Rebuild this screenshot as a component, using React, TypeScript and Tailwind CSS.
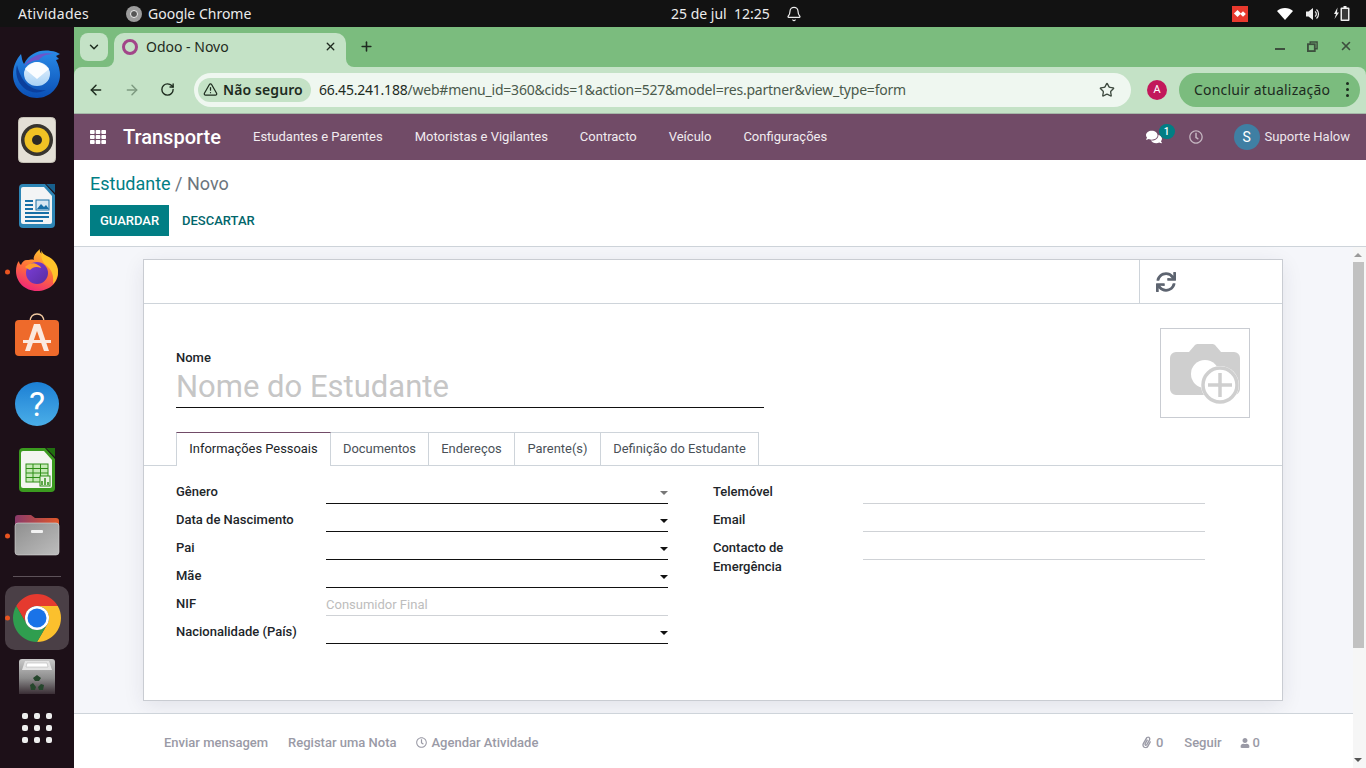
import React from "react";
import { ArrowLeft, ArrowRight, RotateCw, X, Plus, ChevronDown, Star, TriangleAlert, Bell } from "lucide-react";
import { FaSync, FaComments, FaRegClock, FaPaperclip, FaUser, FaTh } from "react-icons/fa";

function Slot({ children, dot, h = 66 }: { children: React.ReactNode; dot?: boolean; h?: number }) {
  return (
    <div className="relative flex items-center justify-center w-[74px] shrink-0" style={{ height: h }}>
      {dot && <span className="absolute left-[5px] top-1/2 -translate-y-1/2 w-[5px] h-[5px] rounded-full bg-[#e95420]" />}
      {children}
    </div>
  );
}

function Thunderbird() {
  return (
    <svg width="50" height="50" viewBox="0 0 50 50">
      <defs>
        <linearGradient id="tb" x1="0" y1="0" x2="0" y2="1"><stop offset="0" stopColor="#2a8be8" /><stop offset="1" stopColor="#0a4fb5" /></linearGradient>
        <linearGradient id="tbe" x1="0" y1="0" x2="0" y2="1"><stop offset="0" stopColor="#e8f3fd" /><stop offset="1" stopColor="#a9d2f5" /></linearGradient>
      </defs>
      <path d="M9 5c1 4 1 7 3 10C18 3 30-1 44 3l4 2-4 2 3 3-3 1c3 5 4 11 4 15 0 12-10 23-23 23C11 49 1 38 1 26 1 17 4 11 9 5z" fill="url(#tb)" />
      <path d="M12 17C18 7 30 2 42 5c-8 0-12 2-15 6-6 0-11 3-15 6z" fill="#6e55c9" />
      <path d="M5 16c-2 8 0 17 7 23 6 5 15 6 22 2-10 1-19-3-24-12-2-4-4-8-5-13z" fill="#0b3f9c" />
      <ellipse cx="25" cy="25" rx="13" ry="12" fill="url(#tbe)" />
      <path d="M13 20c3-3 8-7 12-7s9 4 12 7l-12 10z" fill="#fbfdff" />
    </svg>
  );
}

function Rhythmbox() {
  return (
    <svg width="38" height="46" viewBox="0 0 38 46">
      <rect x="0.5" y="0.5" width="37" height="45" rx="4" fill="#e4e0d6" stroke="#c6c2b7" />
      <circle cx="19" cy="23" r="16" fill="#37342f" />
      <circle cx="19" cy="23" r="12.5" fill="#f0c224" />
      <circle cx="19" cy="23" r="5" fill="#2c2a26" />
    </svg>
  );
}

function Writer() {
  return (
    <svg width="38" height="46" viewBox="0 0 38 46">
      <path d="M5 1h22l10 11v29a4 4 0 0 1-4 4H5a4 4 0 0 1-4-4V5a4 4 0 0 1 4-4z" fill="#2d85b5" />
      <path d="M5 4h21l8 9v26a2 2 0 0 1-2 2H5a2 2 0 0 1-2-2V6a2 2 0 0 1 2-2z" fill="#f3f4f5" />
      <path d="M28 1h9v9z" fill="#175f8c" />
      <rect x="7" y="17" width="8" height="2" fill="#176fa6" />
      <rect x="7" y="21" width="8" height="2" fill="#176fa6" />
      <rect x="7" y="25" width="8" height="2" fill="#176fa6" />
      <rect x="7" y="29" width="24" height="2" fill="#176fa6" />
      <rect x="7" y="33" width="24" height="2" fill="#176fa6" />
      <rect x="7" y="37" width="18" height="2" fill="#176fa6" />
      <rect x="18" y="17" width="13" height="10" fill="#d7e7f2" stroke="#176fa6" />
      <path d="M19 26l4-5 3 3 2-2 3 4z" fill="#176fa6" />
    </svg>
  );
}

function Firefox() {
  return (
    <svg width="44" height="44" viewBox="0 0 44 44" className="-mt-[4px]">
      <defs>
        <linearGradient id="ff" x1="0.7" y1="0" x2="0.3" y2="1"><stop offset="0" stopColor="#ffcb2e" /><stop offset="0.5" stopColor="#ff7139" /><stop offset="1" stopColor="#f0247a" /></linearGradient>
        <linearGradient id="ffp" x1="0" y1="0" x2="1" y2="1"><stop offset="0" stopColor="#7c3fdb" /><stop offset="1" stopColor="#5a2ca0" /></linearGradient>
      </defs>
      <path d="M22 43C10 43 1 34 1 23c0-4 1-8 3-10 0 2 1 3 2 4 1-3 3-5 6-5 3 0 5-1 7 0-1-2 0-6 6-11-1 3 1 5 5 7 7 3 13 9 13 17 0 10-9 18-21 18z" fill="url(#ff)" />
      <path d="M27 1c-1 3 1 5 5 7 7 3 11 9 11 15 0 5-2 10-5 13 1-8-1-14-6-18-5-3-7-10-5-17z" fill="#ffc42a" />
      <circle cx="22" cy="25" r="11" fill="url(#ffp)" />
      <path d="M10 19c4-4 9-5 13-2 2 1 3 2 3 3-5-2-8-1-11 2-2-1-4-2-5-3z" fill="#ff9c2e" />
    </svg>
  );
}

function Software() {
  return (
    <svg width="46" height="44" viewBox="0 0 46 44" className="-mt-[6px]">
      <path d="M16 9c0-5 3-8 7-8s7 3 7 8" fill="none" stroke="#f0c9a0" strokeWidth="1.6" />
      <rect x="1" y="7" width="44" height="36" rx="4" fill="#ee6a2b" />
      <path d="M20 11h6l9 27h-5l-7-20-7 20h-5z" fill="#fbe9df" />
      <rect x="9" y="27" width="28" height="3" fill="#fbe9df" />
    </svg>
  );
}

function Help() {
  return (
    <div className="w-[44px] h-[44px] rounded-full bg-gradient-to-b from-[#1b7fd4] to-[#4aaee8] flex items-center justify-center text-white text-[34px] font-[Roboto] leading-none">?</div>
  );
}

function Calc() {
  return (
    <svg width="38" height="46" viewBox="0 0 38 46">
      <path d="M5 1h22l10 11v29a4 4 0 0 1-4 4H5a4 4 0 0 1-4-4V5a4 4 0 0 1 4-4z" fill="#3b9a1f" />
      <path d="M5 4h21l8 9v26a2 2 0 0 1-2 2H5a2 2 0 0 1-2-2V6a2 2 0 0 1 2-2z" fill="#f3f5f0" />
      <path d="M28 1h9v9z" fill="#216f10" />
      <rect x="8" y="17" width="22" height="18" fill="#c5eab5" stroke="#2f8f17" />
      <path d="M8 21.500h22M8 26h22M8 30.500h22M15 17v18M22.500 17v18" stroke="#2f8f17" />
      <rect x="22" y="29" width="10" height="10" fill="#e8f3e0" stroke="#2f8f17" />
      <path d="M24 38v-4M27 38v-7M30 38v-3" stroke="#2f8f17" strokeWidth="1.500" />
    </svg>
  );
}

function Files() {
  return (
    <svg width="46" height="42" viewBox="0 0 46 42" className="-mt-[2px]">
      <defs>
        <linearGradient id="fo" x1="0" y1="0" x2="1" y2="0"><stop offset="0" stopColor="#8a3a6a" /><stop offset="1" stopColor="#e0582a" /></linearGradient>
        <linearGradient id="fg" x1="0" y1="0" x2="1" y2="1"><stop offset="0" stopColor="#8f8f8f" /><stop offset="1" stopColor="#bdbdbd" /></linearGradient>
      </defs>
      <path d="M1 16V4a3 3 0 0 1 3-3h13l4 3h21a3 3 0 0 1 3 3v9z" fill="url(#fo)" />
      <rect x="1" y="9" width="44" height="32" rx="3" fill="url(#fg)" stroke="#d8d8d8" strokeWidth="0.6" />
      <rect x="17" y="16" width="12" height="3" rx="1" fill="#f2f2f2" />
    </svg>
  );
}

function Chrome({ size }: { size: number }) {
  return (
    <svg width={size} height={size} viewBox="0 0 48 48">
      <path d="M3.220 12A24 24 0 0 1 44.780 12H24A12 12 0 0 0 13.600 30Z" fill="#e53a2f" />
      <path d="M44.780 12H24A12 12 0 0 1 34.390 30L24 48A24 24 0 0 0 44.780 12Z" fill="#fbc02d" />
      <path d="M3.220 12L13.600 30A12 12 0 0 0 34.390 30L24 48A24 24 0 0 1 3.220 12Z" fill="#2f9e4f" />
      <circle cx="24" cy="24" r="12" fill="#fff" />
      <circle cx="24" cy="24" r="9.500" fill="#1a73e8" />
    </svg>
  );
}

function Trash() {
  return (
    <svg width="38" height="36" viewBox="0 0 38 36">
      <defs>
        <linearGradient id="tr" x1="0" y1="0" x2="0" y2="1"><stop offset="0" stopColor="#c9c9c9" /><stop offset="0.55" stopColor="#8d8d8d" /><stop offset="1" stopColor="#3a2e35" /></linearGradient>
      </defs>
      <path d="M4 1h30a3 3 0 0 1 3 3v32H1V4a3 3 0 0 1 3-3z" fill="url(#tr)" />
      <path d="M7 3h24l3 9H4z" fill="#e4e4e4" />
      <path d="M9 5h20l1 4H8z" fill="#fff" stroke="#aaa" strokeWidth="0.5" />
      <path d="M15 20l4-3 4 3-2 3h-4zM12 27l3-2 3 4-1 3h-4zM26 27l-3-1-3 3 1 3h4z" fill="#25462c" />
    </svg>
  );
}

function Dock() {
  return (
    <aside className="w-[74px] shrink-0 bg-[#1d1018] flex flex-col items-center pt-[14px]">
      <Slot><Thunderbird /></Slot>
      <Slot><Rhythmbox /></Slot>
      <Slot><Writer /></Slot>
      <Slot dot><Firefox /></Slot>
      <Slot><Software /></Slot>
      <Slot><Help /></Slot>
      <Slot><Calc /></Slot>
      <Slot dot><Files /></Slot>
      <div className="w-[48px] h-px bg-[#5d5259] mt-[7px] mb-[9px] shrink-0" />
      <Slot dot h={64}>
        <div className="w-[64px] h-[64px] rounded-[10px] bg-[#4a3f46] flex items-center justify-center"><Chrome size={48} /></div>
      </Slot>
      <Slot h={44}><div className="h-[36px] -mb-[8px]"><Trash /></div></Slot>
      <div className="grid grid-cols-3 gap-[6px] mt-[19px]">
        {[0, 1, 2, 3, 4, 5, 6, 7, 8].map((i) => (
          <span key={i} className="w-[6px] h-[6px] rounded-[2px] bg-[#eeeeee]" />
        ))}
      </div>
    </aside>
  );
}

function TopBar() {
  return (
    <header className="h-[27px] shrink-0 bg-[#121212] text-[#ececec] text-[14px] font-['Noto_Sans'] flex items-center">
      <span className="ml-[18px] w-[71px] tracking-[0.3px] whitespace-nowrap">Atividades</span>
      <span className="ml-[37px] w-[16px] h-[16px] rounded-full bg-[#9c9c9c] flex items-center justify-center">
        <span className="w-[8px] h-[8px] rounded-full bg-[#555] border border-[#eee]" />
      </span>
      <span className="ml-[6px] w-[104px] whitespace-nowrap">Google Chrome</span>
      <span className="ml-[419px] w-[98px] whitespace-pre">25 de jul  12:25</span>
      <Bell size={16} strokeWidth={1.800} className="ml-[17px]" />
      <span className="ml-[430px] w-[16px] h-[16px] bg-[#e8392d] flex items-center justify-center gap-[1px]">
        <span className="w-[5px] h-[5px] bg-white rotate-45" />
        <span className="w-[4px] h-[4px] bg-white rotate-45" />
      </span>
      <svg width="16" height="12" viewBox="0 0 16 12" className="ml-[29px]">
        <path d="M8 12L0 3C4-1 12-1 16 3Z" fill="#fff" />
      </svg>
      <svg width="14" height="14" viewBox="0 0 14 14" className="ml-[13px]">
        <path d="M0 4.500h2.500L7 1v12L2.500 9.500H0z" fill="#eee" />
        <path d="M9 4.500a3 3 0 0 1 0 5M10.500 2.500a6 6 0 0 1 0 9" fill="none" stroke="#eee" strokeWidth="1.200" />
      </svg>
      <svg width="17" height="15" viewBox="0 0 17 15" className="ml-[13px]">
        <path d="M4.500 1.500L1 8h2l-1.500 5L6 6.500H4z" fill="#eee" />
        <path d="M10.500 0h3v1.500h2a1 1 0 0 1 1 1V14a1 1 0 0 1-1 1h-7a1 1 0 0 1-1-1V2.500a1 1 0 0 1 1-1h2z" fill="#eee" />
        <rect x="9" y="3" width="6" height="10.500" fill="#3a3a3a" />
      </svg>
    </header>
  );
}

function TabStrip() {
  return (
    <div className="h-[40px] shrink-0 bg-[#7bbc7e] flex items-start pt-[6px] pl-[6px] font-['Noto_Sans']">
      <div className="w-[28px] h-[28px] rounded-[8px] bg-[#c4e2c6] flex items-center justify-center text-[#1d2b1e]">
        <ChevronDown size={14} strokeWidth={2.500} />
      </div>
      <div className="ml-[6px] w-[232px] h-[34px] rounded-t-[10px] bg-[#c4e2c6] flex items-center pl-[8px] pr-[9px] pb-[7px] relative">
        <span className="absolute -left-[8px] bottom-0 w-[8px] h-[8px] bg-[#c4e2c6]">
          <span className="block w-[8px] h-[8px] bg-[#7bbc7e] rounded-br-[8px]" />
        </span>
        <span className="absolute -right-[8px] bottom-0 w-[8px] h-[8px] bg-[#c4e2c6]">
          <span className="block w-[8px] h-[8px] bg-[#7bbc7e] rounded-bl-[8px]" />
        </span>
        <span className="w-[16px] h-[16px] rounded-full border-[3px] border-[#a24689]" />
        <span className="ml-[8px] text-[14px] text-[#1f2a20] flex-1">Odoo - Novo</span>
        <X size={13} strokeWidth={2.500} className="text-[#1f2a20]" />
      </div>
      <Plus size={15} strokeWidth={2.500} className="ml-[13px] mt-[6px] text-[#1f2a20]" />
      <div className="ml-auto flex items-center pr-[13px] mt-[6px] text-[#3d4f3e]">
        <span className="w-[10px] h-[2px] bg-[#3d4f3e] mt-[6px]" />
        <svg width="11" height="11" viewBox="0 0 12 12" className="ml-[22px]">
          <path d="M3.500 3V1h7.500v7.500H8.500" fill="none" stroke="#3d4f3e" strokeWidth="1.600" />
          <rect x="1" y="3.500" width="7.500" height="7.500" fill="none" stroke="#3d4f3e" strokeWidth="2" />
        </svg>
        <X size={14} strokeWidth={2.800} className="ml-[21px]" />
      </div>
    </div>
  );
}

function Toolbar() {
  return (
    <div className="bg-[#7bbc7e] shrink-0">
      <div className="h-[47px] rounded-t-[8px] bg-[#c4e2c6] border-b border-[#a5b8a8] flex items-center pb-[1px] font-['Noto_Sans'] text-[#1d2b1e]">
        <ArrowLeft size={16} strokeWidth={2.200} className="ml-[14px]" />
        <ArrowRight size={16} strokeWidth={2.200} className="ml-[20px] text-[#7d9a80]" />
        <RotateCw size={15} strokeWidth={2.200} className="ml-[20px]" />
        <div className="ml-[19px] w-[937px] h-[34px] rounded-full bg-[#eff7f0] flex items-center pl-[4px] pr-[16px]">
          <div className="h-[24px] w-[113px] rounded-full bg-[#c4e2c6] flex items-center pl-[5px] gap-[5px] shrink-0 whitespace-nowrap">
            <TriangleAlert size={15} strokeWidth={2} />
            <span className="text-[14px] font-semibold tracking-[0.1px]">Não seguro</span>
          </div>
          <span className="ml-[8px] text-[14px] flex-1 whitespace-nowrap tracking-[-0.22px]">
            <span className="text-[#1d2b1e]">66.45.241.188</span>
            <span className="text-[#4b5a4c]">/web#menu_id=360&amp;cids=1&amp;action=527&amp;model=res.partner&amp;view_type=form</span>
          </span>
          <Star size={16} strokeWidth={2} className="text-[#3f4b40]" />
        </div>
        <span className="ml-[16px] w-[20px] h-[20px] rounded-full bg-[#c2185b] text-white text-[11px] flex items-center justify-center">A</span>
        <div className="ml-[12px] w-[181px] h-[34px] rounded-full bg-[#7bbc7e] flex items-center pl-[15px] text-[14px] text-[#1d2b1e]">
          <span className="flex-1 whitespace-nowrap tracking-[0.2px]">Concluir atualização</span>
          <span className="mr-[11px] flex flex-col gap-[3px]">
            <i className="w-[3px] h-[3px] rounded-full bg-[#1d2b1e]" />
            <i className="w-[3px] h-[3px] rounded-full bg-[#1d2b1e]" />
            <i className="w-[3px] h-[3px] rounded-full bg-[#1d2b1e]" />
          </span>
        </div>
      </div>
    </div>
  );
}

function OdooNav() {
  const items = ["Estudantes e Parentes", "Motoristas e Vigilantes", "Contracto", "Veículo", "Configurações"];
  return (
    <nav className="h-[46px] shrink-0 bg-[#714b67] text-white flex items-center font-[Roboto] text-[13px]">
      <FaTh size={16} className="ml-[16px]" />
      <span className="ml-[17px] text-[20px] font-medium w-[98px]">Transporte</span>
      <div className="ml-[32px] flex gap-[32px] text-[#f1ecf0]">
        {items.map((t) => (
          <span key={t}>{t}</span>
        ))}
      </div>
      <div className="ml-auto flex items-center pr-[16px]">
        <div className="relative">
          <FaComments size={16} className="text-white" />
          <span className="absolute -top-[5px] left-[13px] w-[16px] h-[15px] rounded-full bg-[#017e84] text-[10px] font-medium flex items-center justify-center">1</span>
        </div>
        <FaRegClock size={14} className="ml-[27px] text-[#c4b5c0]" />
        <span className="ml-[31px] w-[26px] h-[26px] rounded-full bg-[#3f7fa3] flex items-center justify-center text-[14px]">S</span>
        <span className="ml-[5px] text-[#eee6ec]">Suporte Halow</span>
      </div>
    </nav>
  );
}

function ControlPanel() {
  return (
    <div className="h-[87px] shrink-0 bg-white border-b border-[#ced4da] pl-[16px] pt-[12px] font-[Roboto]">
      <div className="text-[18px] leading-[24px]">
        <span className="text-[#017e84]">Estudante</span>
        <span className="text-[#6c757d]"> / Novo</span>
      </div>
      <div className="mt-[9px] flex items-center text-[13px] font-medium">
        <span className="w-[79px] h-[31px] bg-[#017e84] text-white flex items-center justify-center pt-[1px]">GUARDAR</span>
        <span className="ml-[13px] text-[#01666b] pt-[1px]">DESCARTAR</span>
      </div>
    </div>
  );
}

function Field({ label, caret, light, placeholder, dim, tall }: { label: string; caret?: boolean; light?: boolean; placeholder?: string; dim?: boolean; tall?: boolean }) {
  return (
    <div className="flex h-[28px]">
      <div className={"w-[150px] font-medium text-[#212529] pt-[6px] leading-[19px] " + (tall ? "pr-[40px]" : "")}>{label}</div>
      <div className={"relative flex-1 border-b pt-[6px] leading-[21px] text-[13px] text-[#bdbdbd] " + (dim ? "border-[#cfd2d6]" : "border-[#111]")}>
        {placeholder}
        {caret && (
          <span className={"absolute right-0 bottom-[8px] w-0 h-0 border-x-[4px] border-x-transparent border-t-[4px] " + (light ? "border-t-[#777]" : "border-t-[#111]")} />
        )}
      </div>
    </div>
  );
}

function Sheet() {
  const tabs = [
    ["Documentos", 98],
    ["Endereços", 86],
    ["Parente(s)", 86],
    ["Definição do Estudante", 158],
  ] as const;
  return (
    <section className="w-[1140px] h-[442px] ml-[69px] mt-[12px] bg-white border border-[#c9ccd2] shadow-[0_5px_20px_-1px_rgba(40,40,70,0.1)] font-[Roboto] text-[13px]">
      <div className="h-[44px] border-b border-[#ced4da] flex justify-end">
        <div className="w-[143px] border-l border-[#ced4da] pl-[16px] flex items-center">
          <FaSync size={20} className="text-[#5d6470]" />
        </div>
      </div>
      <div className="h-[128px] pl-[32px] pr-[32px] pt-[24px] flex justify-between">
        <div className="w-[588px] pt-[22px]">
          <div className="font-medium text-[#212529] leading-[16px]">Nome</div>
          <div className="mt-[3px] h-[39px] border-b border-[#111] text-[31px] leading-[35px] text-[#c6c6c6]">Nome do Estudante</div>
        </div>
        <div className="w-[90px] h-[90px] border border-[#c9ccd2] flex items-center justify-center">
          <svg width="70" height="62" viewBox="0 0 70 62">
            <path d="M6 10h13l6-7c1-1 2-1 3-1h14c1 0 2 0 3 1l6 7h13a6 6 0 0 1 6 6v31a6 6 0 0 1-6 6H6a6 6 0 0 1-6-6V16a6 6 0 0 1 6-6z" fill="#cfcfcf" />
            <circle cx="35" cy="32" r="14" fill="#fff" />
            <circle cx="50" cy="43" r="19" fill="#fff" />
            <circle cx="50" cy="43" r="17" fill="none" stroke="#cfcfcf" strokeWidth="3.500" />
            <path d="M50 31v24M38 43h24" stroke="#cfcfcf" strokeWidth="3.500" />
          </svg>
        </div>
      </div>
      <div className="h-[34px] border-b border-[#ced4da] pl-[32px] flex items-stretch text-[#495057] text-[12.9px]">
        <div className="w-[155px] h-[34px] pb-[1px] bg-white border-x border-[#ced4da] border-t border-t-[#714b67] text-[#212529] flex items-center justify-center">Informações Pessoais</div>
        {tabs.map(([t, w]) => (
          <div key={t} className="border-r border-t border-[#ced4da] flex items-center justify-center h-[33px]" style={{ width: w }}>
            {t}
          </div>
        ))}
      </div>
      <div className="pl-[32px] pt-[10px] flex">
        <div className="w-[492px]">
          <Field label="Gênero" caret light />
          <Field label="Data de Nascimento" caret />
          <Field label="Pai" caret />
          <Field label="Mãe" caret />
          <Field label="NIF" placeholder="Consumidor Final" dim />
          <Field label="Nacionalidade (País)" caret />
        </div>
        <div className="w-[492px] ml-[45px]">
          <Field label="Telemóvel" dim />
          <Field label="Email" dim />
          <Field label="Contacto de Emergência" dim tall />
        </div>
      </div>
    </section>
  );
}

function Chatter() {
  return (
    <div className="h-[55px] shrink-0 bg-white border-t border-[#ced4da] flex items-center font-[Roboto] text-[13px] font-medium text-[#9a9aa6] pl-[90px] pr-[93px] pt-[3px]">
      <span>Enviar mensagem</span>
      <span className="ml-[20px]">Registar uma Nota</span>
      <span className="ml-[20px] flex items-center gap-[4px]"><FaRegClock size={11} />Agendar Atividade</span>
      <span className="ml-auto flex items-center gap-[4px]"><FaPaperclip size={11} className="-rotate-[15deg]" />0</span>
      <span className="ml-[21px]">Seguir</span>
      <span className="ml-[18px] flex items-center gap-[3px]"><FaUser size={10} />0</span>
    </div>
  );
}

function Scrollbar() {
  return (
    <div className="w-[13px] shrink-0 bg-[#f6f6f6] flex flex-col items-start">
      <span className="ml-[1px] mt-[6px] w-0 h-0 border-x-[4px] border-x-transparent border-b-[4px] border-b-[#9a9a9a]" />
      <span className="mt-[5px] w-[11px] h-[386px] bg-[#c1c1c1]" />
      <span className="ml-[1px] mt-auto mb-[6px] w-0 h-0 border-x-[4px] border-x-transparent border-t-[4px] border-t-[#555]" />
    </div>
  );
}

export default function App() {
  return (
    <div className="w-[1366px] h-[768px] overflow-hidden flex flex-col bg-[#f5f6fa]">
      <TopBar />
      <div className="flex-1 flex min-h-0">
        <Dock />
        <main className="flex-1 flex flex-col min-w-0">
          <TabStrip />
          <Toolbar />
          <OdooNav />
          <ControlPanel />
          <div className="flex-1 flex min-h-0">
            <div className="flex-1 flex flex-col min-w-0">
              <div className="flex-1 min-h-0"><Sheet /></div>
              <Chatter />
            </div>
            <Scrollbar />
          </div>
        </main>
      </div>
    </div>
  );
}
